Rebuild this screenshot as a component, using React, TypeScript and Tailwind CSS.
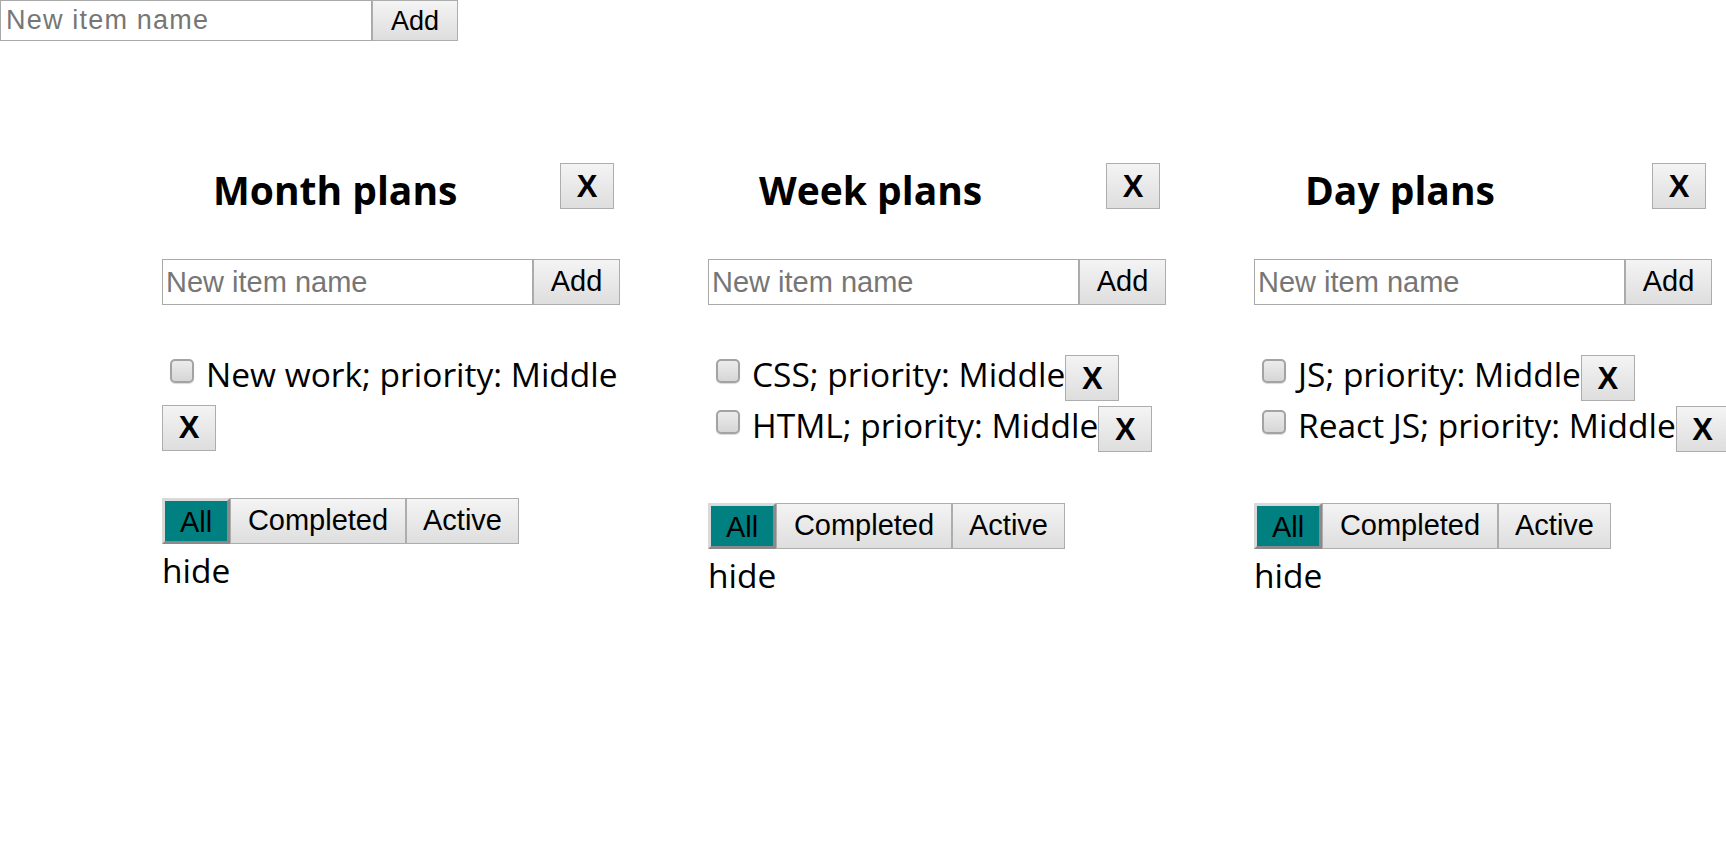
import React from 'react';

type Item = { id: number; name: string; wrap?: boolean };
type List = { id: number; title: string; items: Item[] };

const lists: List[] = [
    { id: 1, title: 'Month plans', items: [{ id: 1, name: 'New work', wrap: true }] },
    { id: 2, title: 'Week plans', items: [{ id: 2, name: 'CSS' }, { id: 3, name: 'HTML' }] },
    { id: 3, title: 'Day plans', items: [{ id: 4, name: 'JS' }, { id: 5, name: 'React JS' }] },
];

const btn =
    "border border-[#adadad] bg-gradient-to-b from-[#f4f4f4] to-[#dedede] text-black font-['Liberation_Sans',Arial,sans-serif]";

function XButton() {
    return (
        <button className={`${btn} w-[54px] h-[46px] shrink-0 text-[31px] font-bold leading-none`}>
            X
        </button>
    );
}

function Check() {
    return (
        <input
            type="checkbox"
            className="appearance-none shrink-0 mt-[4px] ml-[8px] w-[24px] h-[24px] rounded-[5px] border-2 border-[#a3a3a3] bg-gradient-to-b from-[#ececec] to-[#d6d6d6] shadow-[0_1px_1px_rgba(0,0,0,0.15)]"
        />
    );
}

function AddForm({ top }: { top?: boolean }) {
    return (
        <div className={top ? 'flex h-[41px]' : 'flex h-[46px] mt-[50px]'}>
            <input
                placeholder="New item name"
                className={
                    top
                        ? "w-[372px] h-full border border-[#a9a9a9] pl-[5px] text-[27px] tracking-[1.2px] placeholder:text-[#767676] font-['Liberation_Sans',Arial,sans-serif] outline-none"
                        : "w-[371px] h-full border border-[#a9a9a9] pl-[3px] text-[29px] placeholder:text-[#767676] font-['Liberation_Sans',Arial,sans-serif] outline-none"
                }
            />
            <button className={`${btn} ${top ? 'w-[86px] text-[27px]' : 'w-[87px] text-[29px]'} h-full`}>
                Add
            </button>
        </div>
    );
}

function TodoList({ list }: { list: List }) {
    return (
        <div className="w-[458px] shrink-0">
            {/* header */}
            <div className="flex items-center h-[46px]">
                <h3 className="ml-[51px] w-[347px] shrink-0 text-[39px] font-bold leading-none pt-[7px]">
                    {list.title}
                </h3>
                <XButton />
            </div>

            <AddForm />

            {/* items */}
            <ul className="mt-[50px] mb-[46px]">
                {list.items.map((item) =>
                    item.wrap ? (
                        <li key={item.id}>
                            <div className="flex items-start h-[47px]">
                                <Check />
                                <span className="ml-[12px] leading-[38px] whitespace-nowrap">
                                    {item.name}; priority: Middle
                                </span>
                            </div>
                            <div className="h-[52px] -mt-[2px]">
                                <XButton />
                            </div>
                        </li>
                    ) : (
                        <li key={item.id} className="flex items-start h-[51px]">
                            <Check />
                            <span className="ml-[12px] leading-[38px] whitespace-nowrap">
                                {item.name}; priority: Middle
                            </span>
                            <XButton />
                        </li>
                    )
                )}
            </ul>

            {/* filter */}
            <div className="flex h-[46px] text-[29px] font-['Liberation_Sans',Arial,sans-serif]">
                <button className="w-[68px] h-full bg-[#008080] text-black border-[3px] border-t-[#d9d9d9] border-l-[#d9d9d9] border-b-[#8a8a8a] border-r-[#8a8a8a]">
                    All
                </button>
                <button className={`${btn} w-[176px] h-full`}>Completed</button>
                <button className={`${btn} w-[113px] h-full`}>Active</button>
            </div>
            <div className="mt-[7px] leading-[38px]">hide</div>
        </div>
    );
}

export default function App() {
    return (
        <div className="min-h-screen w-full overflow-hidden bg-white text-black text-[33.5px] font-['Open_Sans',sans-serif]">
            <AddForm top />
            <div className="flex gap-[88px] pl-[162px] mt-[122px]">
                {lists.map((list) => (
                    <TodoList key={list.id} list={list} />
                ))}
            </div>
        </div>
    );
}
